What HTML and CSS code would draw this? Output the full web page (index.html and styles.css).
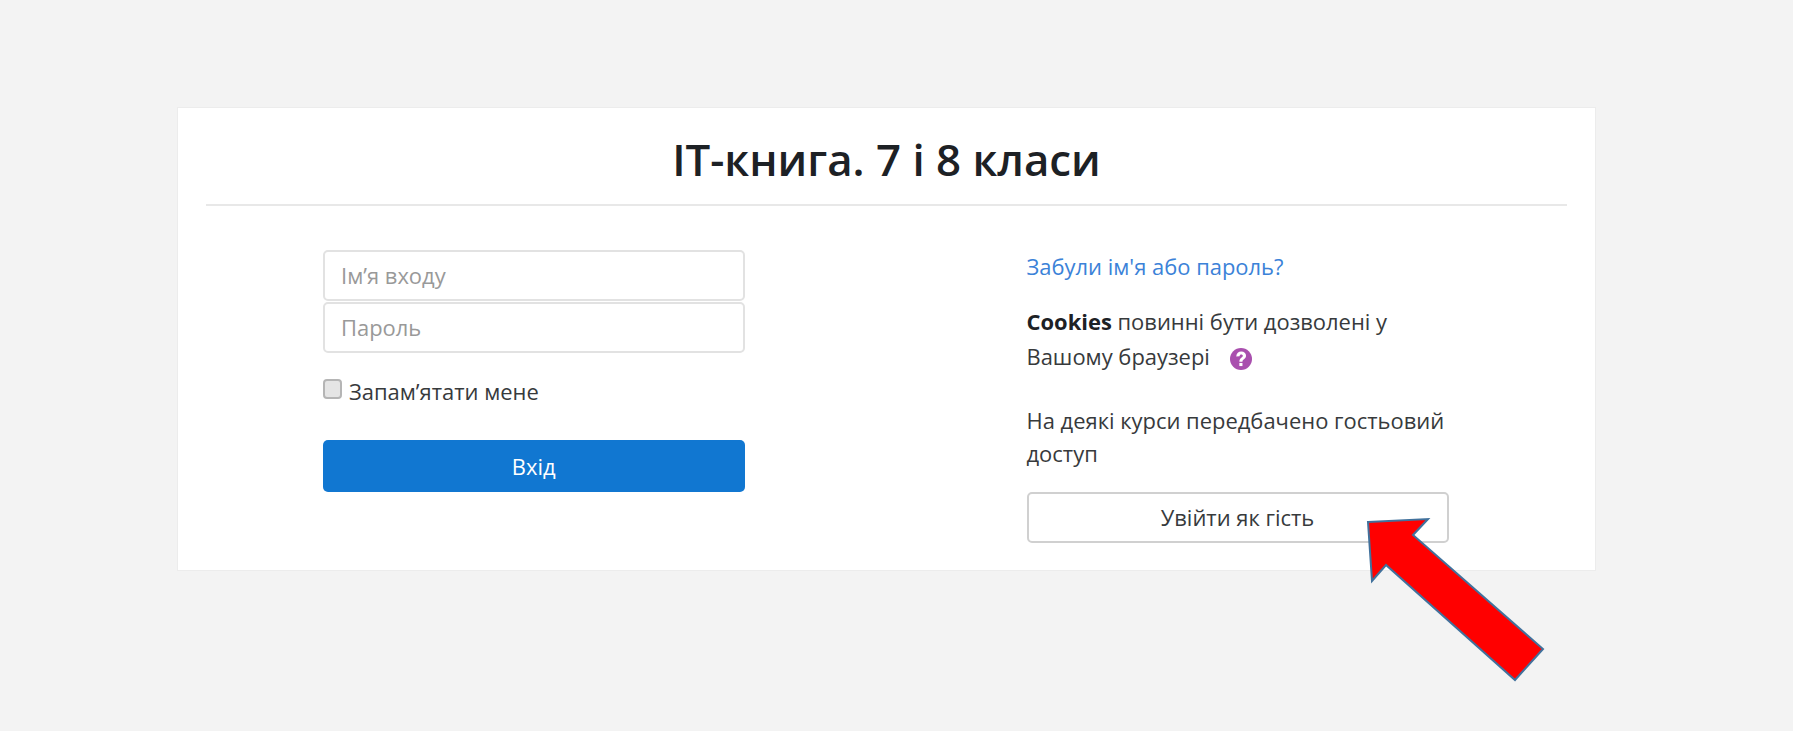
FILE: index.html
```html
<!DOCTYPE html>
<html lang="uk">
<head>
<meta charset="utf-8">
<title>IT-книга. 7 і 8 класи</title>
<link rel="stylesheet" href="styles.css">
</head>
<body>
<main class="card">
  <h1 class="title">IT-книга. 7 і 8 класи</h1>
  <div class="columns">
    <form class="login">
      <div class="fields">
        <input class="field" type="text" placeholder="Ім’я входу">
        <input class="field" type="password" placeholder="Пароль">
      </div>
      <label class="remember"><span class="check"></span>Запам’ятати мене</label>
      <button class="btn-primary" type="button">Вхід</button>
    </form>
    <div class="info">
      <a class="forgot" href="#">Забули ім'я або пароль?</a>
      <p class="cookies"><strong>Cookies</strong> повинні бути дозволені у<br>Вашому браузері
        <svg class="help" viewBox="0 0 24 24" aria-hidden="true"><circle cx="12" cy="12" r="12" fill="#a94fae"/><path d="M6.800 9.200C7.100 5.900 9.300 3.900 12.300 3.900c3.100 0 5.200 2 5.200 4.600 0 2.200-1.300 3.200-2.600 4.100-1 .7-1.300 1.200-1.300 2.300h-3.400c0-2.200.6-3.300 2.200-4.400 1.100-.8 1.600-1.300 1.600-2 0-.9-.7-1.500-1.700-1.500-1.100 0-1.700.7-1.900 1.900z" fill="#fff"/><rect x="10.200" y="16.300" width="3.400" height="3.400" fill="#fff"/></svg></p>
      <p class="guest-note">На деякі курси передбачено гостьовий доступ</p>
      <button class="btn-guest" type="button">Увійти як гість</button>
    </div>
  </div>
</main>
<svg class="arrow" viewBox="0 0 1793 731" aria-hidden="true"><polygon points="1368,522 1428,519 1413,535 1543,649 1515,680 1386,565 1372,581" fill="#ff0000" stroke="#41719c" stroke-width="2"/></svg>
</body>
</html>
```
FILE: styles.css
```css
* { box-sizing: border-box; }
html, body { height: 100%; }
body {
  margin: 0;
  background: #f3f3f3;
  font-family: "Open Sans", sans-serif;
  font-size: 21.95px;
  color: #373a3c;
  overflow: hidden;
}
.card {
  margin: 107px 197px 0 177px;
  height: 464px;
  padding: 0 28px;
  background: #fff;
  border: 1px solid #ececec;
}
.title {
  margin: 0;
  height: 98px;
  border-bottom: 2px solid #e8e8e8;
  font-size: 43.8px;
  font-weight: 600;
  line-height: 102px;
  text-align: center;
  color: #1d2125;
}
.columns {
  display: grid;
  grid-template-columns: 1fr 1fr;
}
.login {
  padding: 44px 142px 0 117px;
  display: flex;
  flex-direction: column;
}
.fields { display: flex; flex-direction: column; gap: 1px; }
.field {
  width: 100%;
  height: 51px;
  padding: 0 16px 1px;
  border: 2px solid #e2e2e2;
  border-radius: 5px;
  background: #fff;
  font: inherit;
  color: #373a3c;
}
.field::placeholder { color: #999; opacity: 1; }
.remember {
  display: flex;
  align-items: center;
  height: 26px;
  margin-top: 25px;
  gap: 7px;
}
.check {
  width: 19px;
  height: 20px;
  margin-top: -4px;
  border: 2px solid #b5b5b5;
  border-radius: 4px;
  background: #e5e5e5;
}
.btn-primary {
  height: 52px;
  margin-top: 36px;
  border: 0;
  border-radius: 5px;
  background: #1177d1;
  color: #fff;
  font: inherit;
}
.info {
  padding: 45px 0 0 140px;
  width: 562px;
  display: flex;
  flex-direction: column;
  align-items: stretch;
}
.forgot {
  color: #3b82d8;
  text-decoration: none;
  line-height: 32px;
}
.cookies, .guest-note {
  margin: 0;
}
.cookies { margin-top: 21px; line-height: 35px; }
.cookies strong { font-weight: 700; color: #1d2125; }
.help {
  width: 22px;
  height: 22px;
  margin-left: 14px;
  vertical-align: -5px;
}
.guest-note { margin-top: 30px; line-height: 33px; }
.btn-guest {
  height: 51px;
  margin-top: 22px;
  border: 2px solid #d0d0d0;
  border-radius: 5px;
  background: #fff;
  color: #373a3c;
  font: inherit;
}
.arrow {
  position: absolute;
  left: 0;
  top: 0;
  width: 1793px;
  height: 731px;
  pointer-events: none;
}
```
